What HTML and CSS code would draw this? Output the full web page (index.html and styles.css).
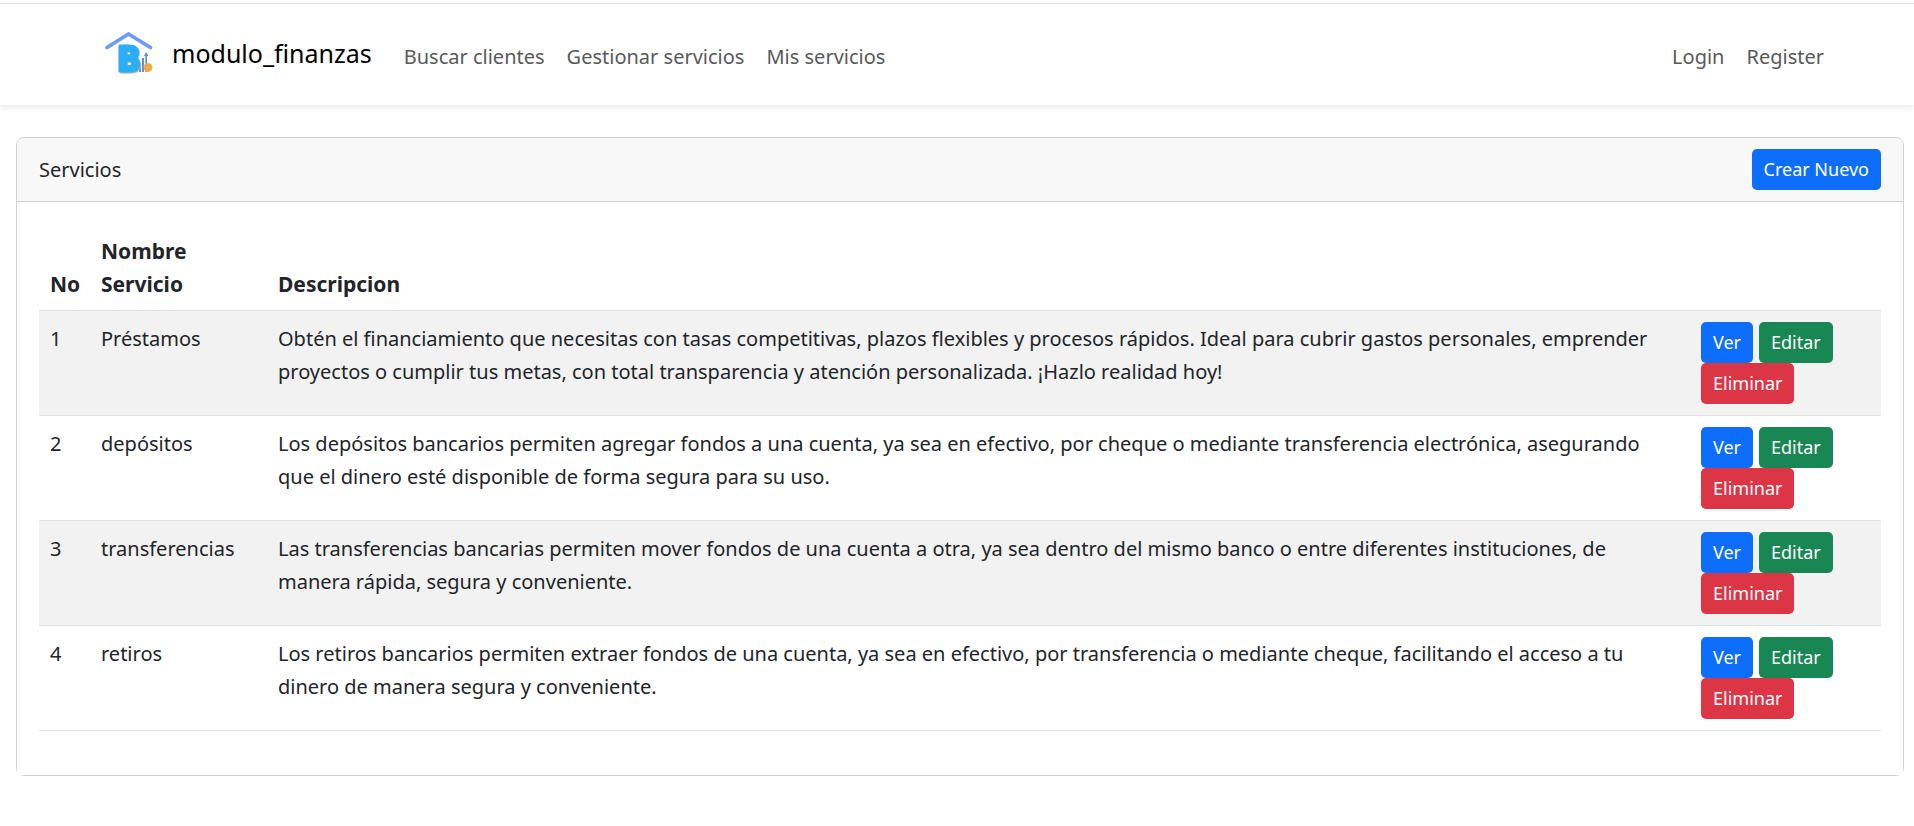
FILE: index.html
```html
<!DOCTYPE html>
<html lang="es">
<head>
<meta charset="utf-8">
<meta name="viewport" content="width=device-width, initial-scale=1">
<title>modulo_finanzas</title>
<link rel="stylesheet" href="styles.css">
</head>
<body>
<nav class="navbar">
  <div class="navbar-inner">
    <a class="brand" href="#">
      <svg class="brand-logo" viewBox="0 0 82 66" aria-hidden="true">
        <path d="M28 25.500L49.500 12L71.500 25.500" fill="none" stroke="#6b9cfa" stroke-width="3.800" stroke-linecap="round" stroke-linejoin="round"/>
        <g fill="#5f8fe0">
          <path d="M57 44h2v6h-2zM60 41h2v9h-2zM63 36h2v14h-2zM66.300 33h1.700v17h-1.700z"/>
          <path d="M67.200 30l2.300 4h-4.600z"/>
        </g>
        <text class="logo-shadow" x="39" y="49.500">B</text>
        <text class="logo-letter" x="38" y="48.500">B</text>
        <circle cx="69" cy="45.500" r="4.500" fill="#f8b04e"/>
        <circle cx="69" cy="45.500" r="2.600" fill="none" stroke="#e99a3d"/>
      </svg>
      <span>modulo_finanzas</span>
    </a>
    <ul class="nav-list">
      <li><a class="nav-link" href="#">Buscar clientes</a></li>
      <li><a class="nav-link" href="#">Gestionar servicios</a></li>
      <li><a class="nav-link" href="#">Mis servicios</a></li>
    </ul>
    <ul class="nav-list nav-end">
      <li><a class="nav-link" href="#">Login</a></li>
      <li><a class="nav-link" href="#">Register</a></li>
    </ul>
  </div>
</nav>
<main class="content">
  <section class="card">
    <header class="card-header">
      <span>Servicios</span>
      <a class="btn btn-primary" href="#">Crear Nuevo</a>
    </header>
    <div class="card-body">
      <table class="table">
        <colgroup><col class="col-no"><col class="col-name"><col><col class="col-actions"></colgroup>
        <thead>
          <tr><th>No</th><th>Nombre Servicio</th><th>Descripcion</th><th></th></tr>
        </thead>
        <tbody>
          <tr>
            <td>1</td><td>Préstamos</td>
            <td>Obtén el financiamiento que necesitas con tasas competitivas, plazos flexibles y procesos rápidos. Ideal para cubrir gastos personales, emprender proyectos o cumplir tus metas, con total transparencia y atención personalizada. ¡Hazlo realidad hoy!</td>
            <td><form class="actions"><a class="btn btn-primary" href="#">Ver</a><a class="btn btn-success" href="#">Editar</a><button class="btn btn-danger" type="button">Eliminar</button></form></td>
          </tr>
          <tr>
            <td>2</td><td>depósitos</td>
            <td>Los depósitos bancarios permiten agregar fondos a una cuenta, ya sea en efectivo, por cheque o mediante transferencia electrónica, asegurando que el dinero esté disponible de forma segura para su uso.</td>
            <td><form class="actions"><a class="btn btn-primary" href="#">Ver</a><a class="btn btn-success" href="#">Editar</a><button class="btn btn-danger" type="button">Eliminar</button></form></td>
          </tr>
          <tr>
            <td>3</td><td>transferencias</td>
            <td>Las transferencias bancarias permiten mover fondos de una cuenta a otra, ya sea dentro del mismo banco o entre diferentes instituciones, de manera rápida, segura y conveniente.</td>
            <td><form class="actions"><a class="btn btn-primary" href="#">Ver</a><a class="btn btn-success" href="#">Editar</a><button class="btn btn-danger" type="button">Eliminar</button></form></td>
          </tr>
          <tr>
            <td>4</td><td>retiros</td>
            <td>Los retiros bancarios permiten extraer fondos de una cuenta, ya sea en efectivo, por transferencia o mediante cheque, facilitando el acceso a tu dinero de manera segura y conveniente.</td>
            <td><form class="actions"><a class="btn btn-primary" href="#">Ver</a><a class="btn btn-success" href="#">Editar</a><button class="btn btn-danger" type="button">Eliminar</button></form></td>
          </tr>
        </tbody>
      </table>
    </div>
  </section>
</main>
</body>
</html>
```
FILE: styles.css
```css
* {
  box-sizing: border-box;
}

body {
  margin: 0;
  padding-top: 3px;
  background: #fff;
  color: #212529;
  font-family: "Noto Sans", "Open Sans", sans-serif;
  font-size: 20px;
  line-height: 33px;
}

a {
  text-decoration: none;
}

.navbar {
  padding: 11px 0;
  border-top: 1px solid #dee2e6;
  background: #fff;
  box-shadow: 0 3px 6px rgba(0, 0, 0, 0.075);
}

.navbar-inner {
  display: flex;
  align-items: center;
  max-width: 1800px;
  margin: 0 auto;
  padding: 0 22px;
}

.brand {
  display: flex;
  align-items: center;
  gap: 11px;
  margin-right: 21px;
  padding: 7px 0 6px;
  color: #000;
  font-size: 25px;
  line-height: 39px;
}

.brand span {
  padding-bottom: 4px;
}

.brand-logo {
  width: 82px;
  height: 66px;
}

.logo-letter,
.logo-shadow {
  font-family: "DejaVu Sans Condensed", "DejaVu Sans", sans-serif;
  font-size: 34px;
  font-weight: 700;
  fill: #2aaef5;
  stroke: #2aaef5;
  stroke-width: 3px;
  stroke-linejoin: round;
}

.logo-shadow {
  fill: #b5b9bf;
  stroke: #b5b9bf;
}

.nav-list {
  display: flex;
  margin: 0;
  padding: 0;
  list-style: none;
}

.nav-end {
  margin-left: auto;
}

.nav-link {
  display: block;
  padding: 14px 11px 11px;
  color: #595959;
}

.content {
  padding: 32px 10px 32px 16px;
}

.card {
  border: 1px solid #d0d1d2;
  border-radius: 8px;
  background: #fff;
}

.card-header {
  display: flex;
  align-items: center;
  justify-content: space-between;
  padding: 11px 22px;
  border-bottom: 1px solid #d0d1d2;
  border-radius: 7px 7px 0 0;
  background: #f8f8f8;
}

.card-body {
  padding: 22px;
  background: #fff;
}

.table {
  width: 100%;
  margin-bottom: 22px;
  border-collapse: collapse;
  table-layout: fixed;
}

.col-no {
  width: 51px;
}

.col-name {
  width: 177px;
}

.col-actions {
  width: 191px;
}

.table th,
.table td {
  padding: 11px;
  border-bottom: 1px solid #dee2e6;
  text-align: left;
  vertical-align: top;
}

.table th {
  padding: 11px 11px 9px;
  font-size: 21px;
  vertical-align: bottom;
}

.table tbody tr:nth-child(odd) {
  background: #f2f2f2;
}

.actions {
  display: flex;
  flex-wrap: wrap;
  column-gap: 6px;
  margin: 0;
}

.btn {
  padding: 6px 12px;
  border: 0;
  border-radius: 5px;
  color: #fff;
  font: 18px/29px "Noto Sans", "Open Sans", sans-serif;
}

.btn-primary {
  background: #0d6efd;
}

.btn-success {
  background: #198754;
}

.btn-danger {
  background: #dc3545;
}
```
